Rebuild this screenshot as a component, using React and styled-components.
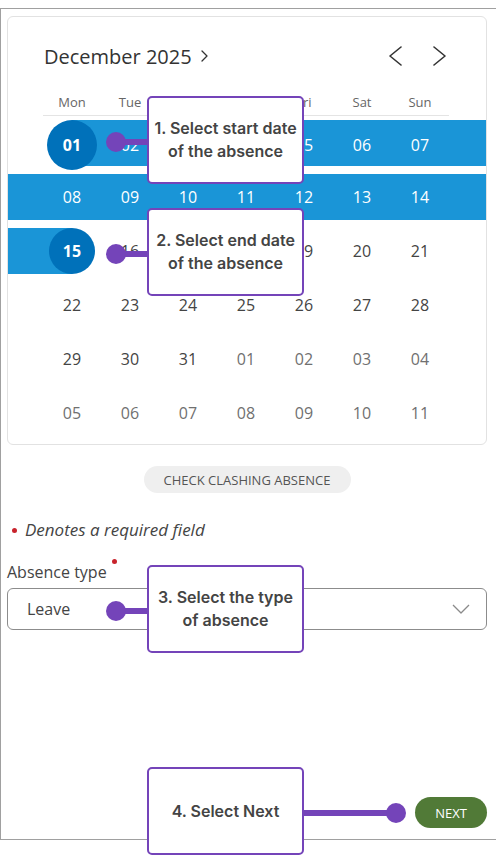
import React from "react";
import styled, { createGlobalStyle } from "styled-components";

const GlobalStyle = createGlobalStyle`
  html, body {
    margin: 0;
    padding: 0;
    background: #fff;
  }
  body {
    font-family: "Open Sans", "Liberation Sans", sans-serif;
    color: #444;
  }
  * { box-sizing: border-box; }
`;

const Page = styled.div`
  position: relative;
  width: 496px;
  height: 858px;
  overflow: hidden;
`;

const Frame = styled.div`
  margin-top: 8px;
  height: 832px;
  border-top: 1px solid #a0a0a0;
  border-left: 1px solid #a0a0a0;
  border-bottom: 1px solid #a0a0a0;
  padding: 7px 9px 11px 6px;
  display: flex;
  flex-direction: column;
`;

const Card = styled.div`
  border: 1px solid #e2e2e2;
  border-radius: 6px;
  padding-bottom: 8px;
`;

const Header = styled.div`
  display: flex;
  align-items: center;
  justify-content: space-between;
  height: 34px;
  margin-top: 22px;
  padding: 0 40px 0 36px;
`;

const Title = styled.div`
  display: flex;
  align-items: center;
  gap: 9px;
  font-size: 20px;
  color: #333;
`;

const NavArrows = styled.div`
  display: flex;
  align-items: center;
  gap: 31px;
`;

const Weekdays = styled.div`
  display: grid;
  grid-template-columns: repeat(7, 58px);
  margin: 19px 0 0 35px;
  width: 406px;
  height: 24px;
  padding-bottom: 3px;
  border-bottom: 1px solid #e4e4e4;
`;

const Weekday = styled.div`
  text-align: center;
  font-size: 13px;
  line-height: 20px;
  color: #666;
`;

const Weeks = styled.div`
  display: flex;
  flex-direction: column;
  gap: 8px;
  margin-top: 4px;
`;

const BLUE = "#1a95d7";

const bandBg = (band) => {
  if (band === "full") return BLUE;
  if (band === "start") return `linear-gradient(to right, transparent 64px, ${BLUE} 64px)`;
  if (band === "end") return `linear-gradient(to right, ${BLUE} 64px, transparent 64px)`;
  return "transparent";
};

const Week = styled.div`
  display: grid;
  grid-template-columns: repeat(7, 58px);
  height: 46px;
  padding-left: 35px;
  background: ${(p) => bandBg(p.$band)};
`;

const Day = styled.div`
  display: flex;
  align-items: center;
  justify-content: center;
  font-size: 16px;
  color: ${(p) => (p.$inBand ? "#fff" : p.$muted ? "#707070" : "#444")};
`;

const Selected = styled.div`
  width: ${(p) => p.$size}px;
  height: ${(p) => p.$size}px;
  border-radius: 50%;
  background: #0071ba;
  color: #fff;
  font-weight: 700;
  font-size: 16px;
  display: flex;
  align-items: center;
  justify-content: center;
`;

const CheckButton = styled.button`
  align-self: center;
  margin-top: 21px;
  width: 207px;
  height: 27px;
  border: none;
  border-radius: 14px;
  background: #efefef;
  font-family: "Open Sans", "Liberation Sans", sans-serif;
  font-size: 13px;
  color: #555;
  padding: 0;
`;

const Required = styled.div`
  display: flex;
  align-items: center;
  gap: 8px;
  margin: 25px 0 0 5px;
  font-size: 17px;
  font-style: italic;
  color: #444;
  line-height: 24px;
`;

const RedDot = styled.span`
  display: inline-block;
  width: 5px;
  height: 5px;
  border-radius: 50%;
  background: #c8232c;
  flex: none;
`;

const Label = styled.div`
  margin-top: 19px;
  font-size: 16px;
  color: #444;
  line-height: 22px;
  display: flex;
  align-items: flex-start;
  gap: 5px;

  ${RedDot} {
    margin-top: -2px;
  }
`;

const Select = styled.div`
  margin-top: 5px;
  height: 42px;
  border: 1px solid #8c8c8c;
  border-radius: 6px;
  display: flex;
  align-items: center;
  justify-content: space-between;
  padding: 0 16px 0 19px;
  font-size: 16px;
  color: #444;
`;

const NextButton = styled.button`
  align-self: flex-end;
  margin-top: auto;
  width: 72px;
  height: 31px;
  border: none;
  border-radius: 16px;
  background: #517a37;
  color: #fff;
  font-family: "Open Sans", "Liberation Sans", sans-serif;
  font-size: 13px;
  padding: 0;
`;

const PURPLE = "#7444b9";

const Callout = styled.div`
  position: absolute;
  top: ${(p) => p.$top}px;
  left: 147px;
  width: 157px;
  height: 88px;
  border: 2px solid ${PURPLE};
  border-radius: 5px;
  background: #fff;
  display: flex;
  align-items: center;
  justify-content: center;
  text-align: center;
  font-family: Inter, "Noto Sans", sans-serif;
  font-weight: 600;
  font-size: 16px;
  line-height: 23px;
  color: #444;
  z-index: 2;
`;

const Connector = styled.div`
  position: absolute;
  top: 41px;
  height: 6px;
  background: ${PURPLE};
  width: ${(p) => p.$length}px;
  ${(p) => (p.$side === "left" ? "right: 100%;" : "left: 100%;")}

  &::after {
    content: "";
    position: absolute;
    top: -7px;
    width: 20px;
    height: 20px;
    border-radius: 50%;
    background: ${PURPLE};
    ${(p) => (p.$side === "left" ? "left: -10px;" : "right: -10px;")}
  }
`;

const Chevron = ({ dir = "right", w = 13, h = 20, sw = 1.6, color = "#333" }) => (
  <svg width={w} height={h} viewBox={`0 0 ${w} ${h}`} fill="none">
    <path
      d={dir === "right" ? `M1 1 L${w - 1} ${h / 2} L1 ${h - 1}` : `M${w - 1} 1 L1 ${h / 2} L${w - 1} ${h - 1}`}
      stroke={color}
      strokeWidth={sw}
      strokeLinecap="round"
      strokeLinejoin="round"
    />
  </svg>
);

const weekdays = ["Mon", "Tue", "Wed", "Thu", "Fri", "Sat", "Sun"];

const weeks = [
  { band: "start", days: ["01", "02", "03", "04", "05", "06", "07"] },
  { band: "full", days: ["08", "09", "10", "11", "12", "13", "14"] },
  { band: "end", days: ["15", "16", "17", "18", "19", "20", "21"] },
  { days: ["22", "23", "24", "25", "26", "27", "28"] },
  { days: ["29", "30", "31", "01", "02", "03", "04"], mutedFrom: 3 },
  { days: ["05", "06", "07", "08", "09", "10", "11"], mutedFrom: 0 },
];

const inBand = (band, i) => band === "full" || (band === "start" && i > 0) || (band === "end" && i < 0);

export default function App() {
  return (
    <Page>
      <GlobalStyle />
      <Frame>
        <Card>
          <Header>
            <Title>
              December 2025
              <Chevron w={7} h={12} sw={1.3} />
            </Title>
            <NavArrows>
              <Chevron dir="left" />
              <Chevron />
            </NavArrows>
          </Header>
          <Weekdays>
            {weekdays.map((d) => (
              <Weekday key={d}>{d}</Weekday>
            ))}
          </Weekdays>
          <Weeks>
            {weeks.map((w, wi) => (
              <Week key={wi} $band={w.band}>
                {w.days.map((d, i) => {
                  if (wi === 0 && i === 0) return <Day key={i}><Selected $size={50}>{d}</Selected></Day>;
                  if (wi === 2 && i === 0) return <Day key={i}><Selected $size={46}>{d}</Selected></Day>;
                  return (
                    <Day
                      key={i}
                      $inBand={inBand(w.band, i)}
                      $muted={w.mutedFrom !== undefined && i >= w.mutedFrom}
                    >
                      {d}
                    </Day>
                  );
                })}
              </Week>
            ))}
          </Weeks>
        </Card>

        <CheckButton>CHECK CLASHING ABSENCE</CheckButton>

        <Required>
          <RedDot />
          Denotes a required field
        </Required>

        <Label>
          Absence type
          <RedDot />
        </Label>
        <Select>
          Leave
          <svg width="18" height="10" viewBox="0 0 18 10" fill="none">
            <path d="M1 1 L9 9 L17 1" stroke="#8a8a8a" strokeWidth="1.3" strokeLinejoin="round" />
          </svg>
        </Select>

        <NextButton>NEXT</NextButton>
      </Frame>

      <Callout $top={96}>
        <Connector $side="left" $length={33} />
        1. Select start date
        <br />
        of the absence
      </Callout>
      <Callout $top={208}>
        <Connector $side="left" $length={33} />
        2. Select end date
        <br />
        of the absence
      </Callout>
      <Callout $top={565}>
        <Connector $side="left" $length={33} />
        3. Select the type
        <br />
        of absence
      </Callout>
      <Callout $top={767}>
        <Connector $side="right" $length={94} />
        4. Select Next
      </Callout>
    </Page>
  );
}
